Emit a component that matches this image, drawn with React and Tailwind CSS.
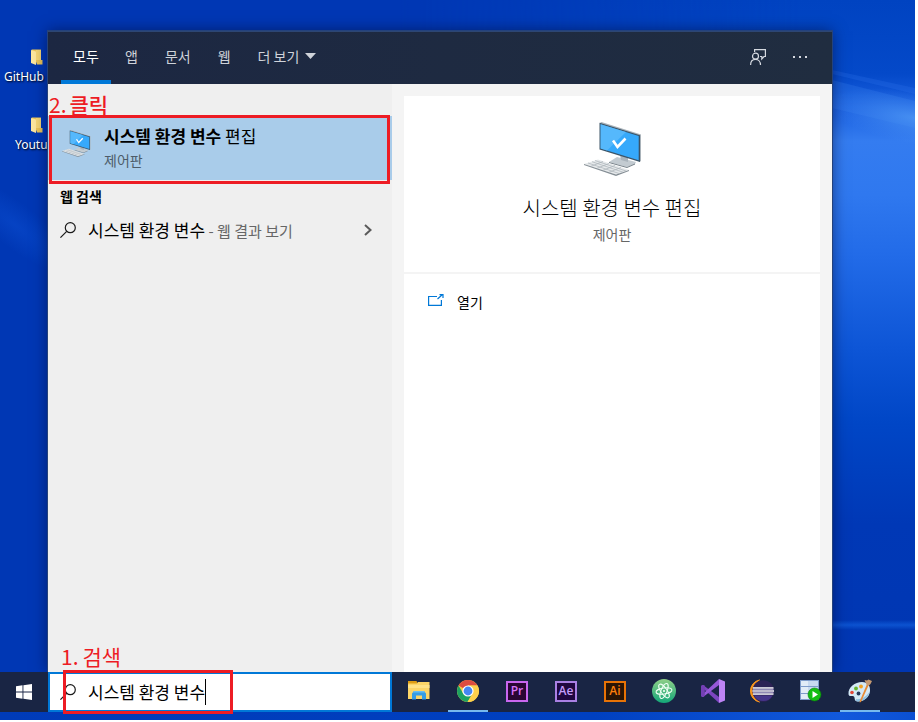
import React from "react";

function Wallpaper() {
  return (
    <svg
      className="absolute inset-0 h-full w-full"
      viewBox="0 0 915 720"
      preserveAspectRatio="none"
      aria-hidden="true"
    >
      <defs>
        <linearGradient id="beam" x1="0" y1="0" x2="0" y2="1">
          <stop offset="0" stopColor="#0043c1" />
          <stop offset="0.11" stopColor="#0449c9" />
          <stop offset="0.16" stopColor="#1a60e0" />
          <stop offset="0.21" stopColor="#347cf0" />
          <stop offset="0.29" stopColor="#2f78ef" />
          <stop offset="0.38" stopColor="#226be8" />
          <stop offset="0.52" stopColor="#0d55d6" />
          <stop offset="0.63" stopColor="#0046c6" />
          <stop offset="0.78" stopColor="#0038b6" />
          <stop offset="1" stopColor="#0036b2" />
        </linearGradient>
        <linearGradient id="fade" x1="0" y1="0" x2="1" y2="0">
          <stop offset="0" stopColor="#000" />
          <stop offset="1" stopColor="#fff" />
        </linearGradient>
        <mask id="beamMask">
          <rect x="400" width="400" height="672" fill="url(#fade)" />
          <rect x="800" width="115" height="672" fill="#fff" />
        </mask>
        <radialGradient id="glow">
          <stop offset="0" stopColor="#5aa4f8" stopOpacity="0.6" />
          <stop offset="1" stopColor="#4a90f4" stopOpacity="0" />
        </radialGradient>
        <linearGradient id="streak" x1="0" y1="0" x2="0" y2="1">
          <stop offset="0" stopColor="#0b55d2" stopOpacity="0" />
          <stop offset="0.5" stopColor="#0c52d0" />
          <stop offset="1" stopColor="#0b55d2" stopOpacity="0" />
        </linearGradient>
        <linearGradient id="foot" x1="0" y1="0" x2="1" y2="0">
          <stop offset="0" stopColor="#003bb8" />
          <stop offset="0.65" stopColor="#0040c0" />
          <stop offset="0.92" stopColor="#1259dc" />
          <stop offset="1" stopColor="#0b50d2" />
        </linearGradient>
        <radialGradient id="leftGlow">
          <stop offset="0" stopColor="#0a4cd0" stopOpacity="0.55" />
          <stop offset="1" stopColor="#0a4cd0" stopOpacity="0" />
        </radialGradient>
      </defs>
      <rect width="915" height="720" fill="#0037b4" />
      <rect x="400" width="515" height="672" fill="url(#beam)" mask="url(#beamMask)" />
      <path d="M832 70L915 88V94L832 74Z" fill="#2e72ea" opacity="0.25" />
      <path d="M832 80L915 101V128L832 108Z" fill="#3d83f0" opacity="0.25" />
      <ellipse cx="915" cy="118" rx="90" ry="26" fill="url(#glow)" transform="rotate(10 915 118)" />
      <rect x="832" y="620" width="83" height="10" fill="url(#streak)" />
      <ellipse cx="15" cy="225" rx="75" ry="22" fill="url(#leftGlow)" transform="rotate(38 15 225)" />
      <rect y="712" width="915" height="8" fill="url(#foot)" />
    </svg>
  );
}

function Folder() {
  return (
    <svg className="h-4 w-3" viewBox="0 0 12 16" aria-hidden="true">
      <path d="M0.500 0.500H10V11L11.500 11V15.500H6Z" fill="#eec556" />
      <path d="M0 1L5 2.500V16L0 14Z" fill="#fde79f" />
      <path d="M5 1H10V11H5Z" fill="#f7d774" />
    </svg>
  );
}

function ComputerIcon({ className }) {
  return (
    <svg className={className} viewBox="0 0 60 56" aria-hidden="true">
      <path d="M27 40L35 35L54 40L53 42L45 45Z" fill="#c3cbd1" />
      <path d="M27 40L45 45L53 41.500V42.500L45 46L27 41Z" fill="#77828a" />
      <path d="M38 33L46 35V40L39 38Z" fill="#aab4bc" />
      <path d="M18 0.800L19.500 0L59 12.500V39L57.500 40Z" fill="#aab3ba" />
      <path d="M17.500 0.800L58 13.200V40L17.500 27.500Z" fill="#3c5467" />
      <path d="M18.600 2.300L56.700 14V38.200L18.600 26.600Z" fill="#36a9fb" />
      <path d="M18.600 2.300L44 10L25 28.500L18.600 26.600Z" fill="#60bdfc" opacity="0.75" />
      <path d="M31 18.500L35.500 25L43.500 16.500" fill="none" stroke="#fff" strokeWidth="2.600" />
      <path d="M2 42L16 37.500L47 48L34 52.500Z" fill="#e6e9eb" />
      <path d="M2 42L34 52.500L47 48V49L34 54L2 43Z" fill="#858e95" />
      <path
        d="M6 41L37 51.500M10 39.700L41 50.200M13 38.500L44 49M9 44.300L21 39.500M15 46.300L27 41.500M21 48.300L33 43.500M27 50.300L39 45.500"
        stroke="#a9b1b7"
        strokeWidth="0.700"
      />
    </svg>
  );
}

function SearchIcon() {
  return (
    <svg className="h-4 w-4 shrink-0" viewBox="0 0 16 16" fill="none" stroke="#1a1a1a" strokeWidth="1.200" aria-hidden="true">
      <circle cx="10.300" cy="5.700" r="5" />
      <path d="M6.700 9.300L0.400 15.600" />
    </svg>
  );
}

function FeedbackIcon() {
  return (
    <svg className="h-4 w-4" viewBox="0 0 16 16" fill="none" stroke="#d5d9e0" strokeWidth="1.200" aria-hidden="true">
      <path d="M4.600 3V0.700H15.400V7.500H14L11.800 10V7.500H10" />
      <circle cx="5.500" cy="7.200" r="3" />
      <path d="M0.600 16C0.600 12.500 2.700 10.300 5.500 10.300S10.500 12.500 10.500 16" />
    </svg>
  );
}

function ExplorerIcon() {
  return (
    <svg className="h-6 w-6" viewBox="0 0 24 24" aria-hidden="true">
      <path d="M1 2H9.500L11 5H1Z" fill="#dd9c13" />
      <path d="M1 4.500H10L11 3H22.500V20H1Z" fill="#fbd568" />
      <path d="M1 6H22.500V9H1Z" fill="#ffe287" />
      <path d="M5 20.500V14.500L7 12H17L19 14.500V20.500H15V16.500H9V20.500Z" fill="#359ce5" />
      <path d="M6 13.500L7 12H17L18 13.500Z" fill="#66bdf2" />
    </svg>
  );
}

function ChromeIcon() {
  return (
    <svg className="h-6 w-6" viewBox="0 0 24 24" aria-hidden="true">
      <circle cx="12" cy="12" r="11" fill="#f9cb45" />
      <path d="M12 12L2.500 6.500A11 11 0 0 1 21.500 6.500L12 6.500Z" fill="#dd4d41" />
      <path d="M2.500 6.500A11 11 0 0 0 11.500 23L16.500 14.500L12 12L7.200 14.600Z" fill="#1ca261" />
      <path d="M12 6.500H21.500A11 11 0 0 1 11.500 23L16.800 14.500Z" fill="#fdd04c" />
      <circle cx="12" cy="12" r="5.600" fill="#fff" />
      <circle cx="12" cy="12" r="4.400" fill="#4587f3" />
    </svg>
  );
}

function AtomIcon() {
  return (
    <svg className="h-6 w-6" viewBox="0 0 24 24" aria-hidden="true">
      <defs>
        <linearGradient id="atom" x1="0" y1="0" x2="0" y2="1">
          <stop offset="0" stopColor="#8fcf88" />
          <stop offset="1" stopColor="#13a779" />
        </linearGradient>
      </defs>
      <circle cx="12" cy="12" r="12" fill="url(#atom)" />
      <g fill="none" stroke="#f0fff5" strokeWidth="1">
        <ellipse cx="12" cy="12" rx="8" ry="3" transform="rotate(-8 12 12)" />
        <ellipse cx="12" cy="12" rx="8" ry="3" transform="rotate(55 12 12)" />
        <ellipse cx="12" cy="12" rx="8" ry="3" transform="rotate(112 12 12)" />
      </g>
      <circle cx="12" cy="12" r="1" fill="#fff" />
    </svg>
  );
}

function VisualStudioIcon() {
  return (
    <svg className="h-6 w-6" viewBox="0 0 24 24" aria-hidden="true">
      <path d="M0 6.800L2 6V18L0 17.200Z" fill="#6534a6" />
      <path d="M2 6L18 18V24L0 7.500Z" fill="#7d45c0" />
      <path d="M0 16.800L18 0V6L2 18Z" fill="#9658d7" />
      <path d="M2 6L3.800 6.500L3.800 17L2 18L0 17V7Z" fill="#7340b4" />
      <path d="M18 0L24 2.500V21.500L18 24Z" fill="#bd84f5" />
    </svg>
  );
}

function EclipseIcon() {
  return (
    <svg className="h-6 w-6" viewBox="0 0 24 24" aria-hidden="true">
      <path d="M9.500 1A11.200 11.200 0 0 0 9.500 23A12.500 12.500 0 0 1 9.500 1Z" fill="#f7941e" stroke="#f7941e" strokeWidth="1" />
      <circle cx="13.200" cy="12" r="10.800" fill="#2c2255" />
      <path d="M4 16.500A10.500 10.500 0 0 0 22.500 16.500Z" fill="#46358a" />
      <path d="M3 9.100H23.500M2.500 12.100H24M3 15.100H23.500" stroke="#fff" strokeWidth="1.500" />
      <path d="M3 10.600H23.500M3 13.600H23.500" stroke="#8f88b4" strokeWidth="1.500" />
    </svg>
  );
}

function ServerIcon() {
  return (
    <svg className="h-6 w-6" viewBox="0 0 24 24" aria-hidden="true">
      <rect x="1" y="1" width="19" height="20" fill="#7f9ccb" />
      <path d="M2 2H19V7H2ZM2 8H19V14H2ZM2 15H19V20H2Z" fill="#c8d9f0" />
      <path d="M2 2H9V7H2ZM2 8H9V14H2ZM2 15H9V20H2Z" fill="#e2ecf8" />
      <circle cx="15.500" cy="15.500" r="6.500" fill="#13bd13" stroke="#087f08" strokeWidth="0.600" />
      <path d="M13.500 12L19 15.500L13.500 19Z" fill="#fff" />
    </svg>
  );
}

function PaintIcon() {
  return (
    <svg className="h-6 w-6" viewBox="0 0 24 24" aria-hidden="true">
      <path d="M0.500 15C0 8 7 3 14 3C20 3 22.500 7 22 12C21.500 18 16 22.500 10 22.500C5 22.500 8 17.500 5 17C3 16.500 0.800 18 0.500 15Z" fill="#d3e9f6" />
      <path d="M8 20C12 21 18 18 21.500 13C20.500 18.500 16 22.500 10 22.500C8 22.500 7.500 21.500 8 20Z" fill="#8fc0df" />
      <circle cx="10.500" cy="14.500" r="1.900" fill="#263b5c" />
      <circle cx="4" cy="13.500" r="1.800" fill="#e24838" />
      <circle cx="8" cy="9.500" r="1.900" fill="#66b82e" />
      <circle cx="13" cy="7.500" r="1.900" fill="#f2a324" />
      <path d="M19 5L20.500 6.500L13 23L11.500 23.500L12 21.500Z" fill="#e88b34" />
      <path d="M16.500 1L19 1.500L20.500 0.500L24 2L22.500 5L20.500 7L18.500 5.500Z" fill="#c69a72" />
    </svg>
  );
}

const tabs = ["앱", "문서", "웹"];

function PanelHeader() {
  return (
    <header className="flex h-[53px] shrink-0 items-stretch justify-between border-t border-[#2d4673] bg-linear-to-r from-[#1c2742] to-[#202d40] text-sm text-[#cfd3da]">
      <nav className="flex items-stretch pl-[13px]">
        <button type="button" className="w-[50px] border-b-4 border-[#0078d7] text-white">
          모두
        </button>
        <div className="flex gap-[27px] pb-1 pl-[14px]">
          {tabs.map((tab) => (
            <button key={tab} type="button">
              {tab}
            </button>
          ))}
          <button type="button" className="flex items-center gap-[6px]">
            더 보기
            <svg className="h-[6px] w-[11px]" viewBox="0 0 11 6" aria-hidden="true">
              <path d="M0 0H11L5.500 6Z" fill="#cfd3da" />
            </svg>
          </button>
        </div>
      </nav>
      <div className="flex items-center gap-[26px] pr-6 pb-[2px]">
        <button type="button" aria-label="피드백">
          <FeedbackIcon />
        </button>
        <button type="button" aria-label="옵션">
          <svg className="h-4 w-4" viewBox="0 0 16 16" aria-hidden="true">
            <path d="M1 7H3V9H1ZM7 7H9V9H7ZM13 7H15V9H13Z" fill="#d5d9e0" />
          </svg>
        </button>
      </div>
    </header>
  );
}

function Results() {
  return (
    <section className="relative flex w-[344px] shrink-0 flex-col bg-[#efefef] pt-8">
      <button type="button" className="flex h-16 items-start bg-[#a9ccea] pl-3 text-left">
        <ComputerIcon className="mt-[14px] h-7 w-8 shrink-0" />
        <span className="flex flex-col pl-3 pt-2">
          <span className="text-[17px] leading-6">
            <b className="font-bold">시스템 환경 변수</b> 편집
          </span>
          <span className="text-sm leading-6 text-[#4d5c69]">제어판</span>
        </span>
      </button>
      <h2 className="h-8 pl-3 text-sm leading-8 font-bold">웹 검색</h2>
      <button type="button" className="flex h-9 items-center pl-3 pr-5 text-left">
        <SearchIcon />
        <span className="flex-1 pl-3 text-[17px]">
          시스템 환경 변수<span className="text-[15px] text-[#666]"> - 웹 결과 보기</span>
        </span>
        <svg className="h-3 w-2" viewBox="0 0 8 12" fill="none" stroke="#5a5a5a" strokeWidth="2" aria-hidden="true">
          <path d="M1 1L6.500 6L1 11" />
        </svg>
      </button>
      <div className="absolute top-[31px] left-px h-[69px] w-[341px] border-3 border-[#ed1c24]" />
      <p className="absolute top-1 left-px flex gap-[3px] text-[21px] leading-8 text-[#ed1c24]">
        <span>2.</span>
        <span className="font-medium">클릭</span>
      </p>
      <p className="absolute bottom-0 left-[13px] flex gap-1 text-[21px] leading-8 text-[#ed1c24]">
        <span>1.</span>
        <span>검색</span>
      </p>
    </section>
  );
}

function Details() {
  return (
    <section className="flex flex-1 flex-col gap-[2px] bg-[#f4f4f4] px-3 pt-3">
      <div className="flex h-44 flex-col items-center bg-white pt-[26px]">
        <ComputerIcon className="h-14 w-[60px]" />
        <h1 className="pt-4 text-xl leading-7 font-light">시스템 환경 변수 편집</h1>
        <p className="text-sm leading-6 text-[#666]">제어판</p>
      </div>
      <div className="flex-1 bg-white px-6 pt-4">
        <button type="button" className="flex items-center gap-[13px] text-sm leading-6">
          <svg className="h-4 w-4" viewBox="0 0 16 16" fill="none" stroke="#0078d7" strokeWidth="1.200" aria-hidden="true">
            <path d="M9 2.500H0.600V11.400H13.400V6" />
            <path d="M9.500 5L14.500 0.500M11.500 0.600H15V4" />
          </svg>
          열기
        </button>
      </div>
    </section>
  );
}

function AdobeIcon({ label, className }) {
  return (
    <span
      className={
        "flex h-[21px] w-[22px] items-center justify-center border-2 font-['Open_Sans','Noto_Sans',sans-serif] text-xs font-semibold " +
        className
      }
    >
      {label}
    </span>
  );
}

const apps = [
  { name: "파일 탐색기", icon: <ExplorerIcon /> },
  { name: "Chrome", icon: <ChromeIcon />, running: true },
  { name: "Premiere Pro", icon: <AdobeIcon label="Pr" className="border-[#c966ef] bg-[#2a0634] text-[#d874fa]" /> },
  { name: "After Effects", icon: <AdobeIcon label="Ae" className="border-[#a980e4] bg-[#1f0740] text-[#c49cfb]" /> },
  { name: "Illustrator", icon: <AdobeIcon label="Ai" className="border-[#e87306] bg-[#2a1505] text-[#ff7f0a]" /> },
  { name: "Atom", icon: <AtomIcon /> },
  { name: "Visual Studio", icon: <VisualStudioIcon /> },
  { name: "Eclipse", icon: <EclipseIcon /> },
  { name: "Server", icon: <ServerIcon /> },
  { name: "그림판", icon: <PaintIcon />, running: true },
];

function Taskbar() {
  return (
    <footer className="relative flex h-10 shrink-0 bg-[#192544]">
      <button type="button" aria-label="시작" className="flex w-12 items-center justify-center">
        <svg className="h-4 w-4" viewBox="0 0 16 16" aria-hidden="true">
          <path d="M0 2.200L6.500 1.300V7.500H0ZM7.400 1.200L16 0V7.500H7.400ZM0 8.500H6.500V14.700L0 13.800ZM7.400 8.500H16V16L7.400 14.800Z" fill="#fff" />
        </svg>
      </button>
      <label className="relative flex w-[344px] items-center border-2 border-[#0078d7] bg-white pl-[10px]">
        <SearchIcon />
        <input
          aria-label="검색"
          defaultValue="시스템 환경 변수"
          className="ml-3 field-sizing-content text-[17px] outline-none"
        />
        <span className="h-[26px] w-px bg-black" />
        <span className="absolute -top-1 left-[13px] h-11 w-[170px] border-3 border-[#ed1c24]" />
      </label>
      <div className="flex gap-[9px] pl-[7px]">
        {apps.map((app) => (
          <button
            key={app.name}
            type="button"
            aria-label={app.name}
            className={
              "flex w-10 items-center justify-center border-b-2 " +
              (app.running ? "border-[#76b9ed]" : "border-transparent")
            }
          >
            {app.icon}
          </button>
        ))}
      </div>
    </footer>
  );
}

export default function App() {
  return (
    <div className="flex min-h-screen flex-col bg-white pr-[3px] pb-[2px] font-['Noto_Sans_CJK_KR',sans-serif] text-black">
      <main className="relative flex flex-1 flex-col pb-2">
        <Wallpaper />
        <div className="relative flex flex-1 overflow-hidden pt-[31px]">
          <ul className="flex w-12 shrink-0 flex-col gap-7 pt-[18px] font-['Noto_Sans',sans-serif] text-xs leading-6 whitespace-nowrap text-white text-shadow-[1px_1px_2px_#000]">
            <li className="pl-1">
              <div className="pl-[27px]">
                <Folder />
              </div>
              GitHub D
            </li>
            <li className="pl-[15px]">
              <div className="pl-4">
                <Folder />
              </div>
              Youtu
            </li>
          </ul>
          <div className="relative flex w-[784px] flex-col shadow-[0_0_14px_rgba(0,10,50,0.6)] ring-1 ring-[#24427c]">
            <PanelHeader />
            <div className="flex flex-1">
              <Results />
              <Details />
            </div>
          </div>
        </div>
        <Taskbar />
      </main>
    </div>
  );
}
